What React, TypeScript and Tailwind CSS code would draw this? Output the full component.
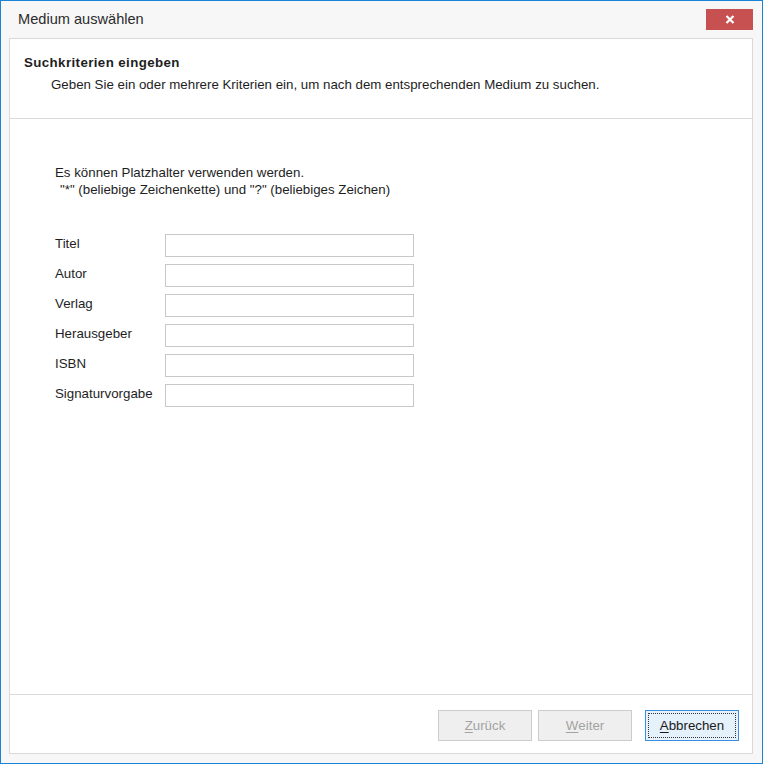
const fields = ['Titel', 'Autor', 'Verlag', 'Herausgeber', 'ISBN', 'Signaturvorgabe'];

function WizardButton({
  label,
  accessKey,
  disabled,
  focused,
}: {
  label: string;
  accessKey: string;
  disabled?: boolean;
  focused?: boolean;
}) {
  const rest = label.slice(1);
  return (
    <button
      disabled={disabled}
      className={`w-[94px] h-[31px] flex items-center justify-center text-[13.3px] ${
        disabled
          ? 'bg-[#efefef] border border-[#cccccc] text-[#a3a3a3]'
          : focused
            ? 'bg-[#e5f1fb] border border-[#3c8fe0] text-[#1a1a1a] p-[2px]'
            : 'bg-[#e1e1e1] border border-[#adadad] text-[#1a1a1a]'
      }`}
    >
      {focused ? (
        <span className="w-full h-full flex items-center justify-center border border-dotted border-[#333333]">
          <span className="underline underline-offset-2">{accessKey}</span>
          {rest}
        </span>
      ) : (
        <>
          <span className="underline underline-offset-2">{accessKey}</span>
          {rest}
        </>
      )}
    </button>
  );
}

export default function App() {
  return (
    <div
      className="w-[763px] h-[764px] border border-[#1883d7] bg-[#f7f7f7] flex flex-col text-[#1e1e1e]"
      style={{ fontFamily: '"Liberation Sans", Arial, sans-serif' }}
    >
      {/* Title bar */}
      <div className="h-[37px] flex items-start justify-between pl-[17px] pr-[9px]">
        <span className="text-[14.6px] text-[#2b2b2b] mt-[8px]">Medium auswählen</span>
        <button className="mt-[8px] w-[47px] h-[21px] bg-[#c75050] flex items-center justify-center">
          <svg width="10" height="9" viewBox="0 0 10 9">
            <path d="M1.5 1 L8.5 8 M8.5 1 L1.5 8" stroke="white" strokeWidth="2.2" />
          </svg>
        </button>
      </div>

      {/* Inner panel */}
      <div className="ml-[8px] mr-[9px] mb-[9px] flex-1 bg-white border border-[#d9d9d9] flex flex-col">
        {/* Header */}
        <div className="h-[80px] border-b border-[#dadada] pl-[14px] pt-[14px]">
          <div className="text-[13.3px] font-bold tracking-[0.4px] text-[#1e1e1e]">Suchkriterien eingeben</div>
          <div className="text-[13.3px] pl-[27px] mt-[2px]">
            Geben Sie ein oder mehrere Kriterien ein, um nach dem entsprechenden Medium zu suchen.
          </div>
        </div>

        {/* Content */}
        <div className="flex-1 pl-[45px] pt-[45px]">
          <div className="text-[13.3px] leading-[17px]">
            <div>Es können Platzhalter verwenden werden.</div>
            <div className="pl-[5px]">"*" (beliebige Zeichenkette) und "?" (beliebiges Zeichen)</div>
          </div>
          <div className="mt-[36px] flex flex-col gap-[7px]">
            {fields.map((f) => (
              <div key={f} className="flex items-center">
                <span className="w-[110px] text-[13.3px] -mt-[3px]">{f}</span>
                <input className="w-[249px] h-[23px] border border-[#c8c8c8] outline-none bg-white" />
              </div>
            ))}
          </div>
        </div>

        {/* Footer */}
        <div className="h-[59px] border-t border-[#dadada] flex items-start justify-end pr-[13px] pt-[15px]">
          <div className="flex">
            <WizardButton label="Zurück" accessKey="Z" disabled />
            <div className="w-[6px]" />
            <WizardButton label="Weiter" accessKey="W" disabled />
            <div className="w-[13px]" />
            <WizardButton label="Abbrechen" accessKey="A" focused />
          </div>
        </div>
      </div>
    </div>
  );
}
